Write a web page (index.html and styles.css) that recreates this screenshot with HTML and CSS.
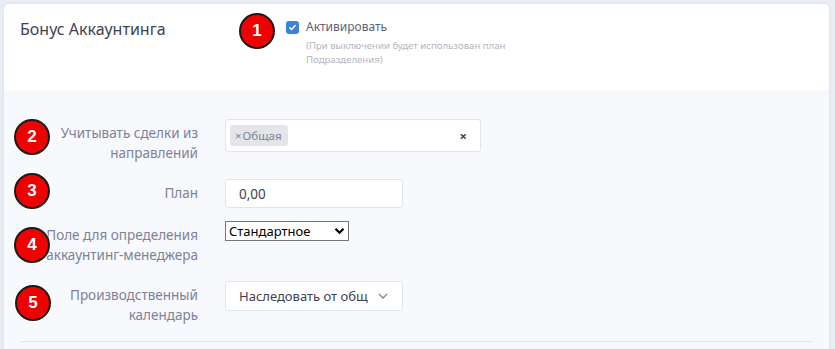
FILE: index.html
```html
<!DOCTYPE html>
<html lang="ru">
<head>
    <meta charset="UTF-8">
    <meta name="viewport" content="width=device-width, initial-scale=1.0">
    <title>Бонус Аккаунтинга</title>
    <link rel="stylesheet" href="styles.css">
</head>
<body>
    <div class="card">
        <div class="card-header">
            <h3 class="card-title">Бонус Аккаунтинга</h3>
            <div class="activate">
                <label class="check">
                    <span class="check-box">
                        <svg width="9" height="9" viewBox="0 0 10 10"><path d="M2 5.2l2 2 4-4.4" fill="none" stroke="#fff" stroke-width="1.6" stroke-linecap="round" stroke-linejoin="round"/></svg>
                    </span>
                    Активировать
                </label>
                <div class="hint">(При выключении будет использован план<br>Подразделения)</div>
            </div>
            <span class="marker marker-1">1</span>
        </div>

        <div class="card-body">
            <div class="form-row row-deals">
                <span class="marker marker-2">2</span>
                <label class="form-label">Учитывать сделки из<br>направлений</label>
                <div class="multi">
                    <span class="tag"><span class="tag-x">×</span>Общая</span>
                    <span class="multi-clear">×</span>
                </div>
            </div>

            <div class="form-row row-plan">
                <span class="marker marker-3">3</span>
                <label class="form-label">План</label>
                <input class="text-input" type="text" value="0,00">
            </div>

            <div class="form-row row-field">
                <span class="marker marker-4">4</span>
                <label class="form-label">Поле для определения<br>аккаунтинг-менеджера</label>
                <div class="native-select">
                    <span>Стандартное</span>
                    <svg width="11" height="8" viewBox="0 0 11 8"><path d="M1.5 1.8l4 4 4-4" fill="none" stroke="#000" stroke-width="2.2"/></svg>
                </div>
            </div>

            <div class="form-row row-calendar">
                <span class="marker marker-5">5</span>
                <label class="form-label">Производственный<br>календарь</label>
                <div class="select">
                    <span class="select-value">Наследовать от общ</span>
                    <svg width="10" height="6" viewBox="0 0 10 6"><path d="M1 1l4 4 4-4" fill="none" stroke="#7e8299" stroke-width="1.3"/></svg>
                </div>
            </div>

            <div class="divider"></div>
        </div>
    </div>
</body>
</html>
```

FILE: styles.css
```css
body {
    margin: 0;
    padding: 4px 6px 0 4px;
    background: #e9edf4;
    font-family: "Noto Sans", "Open Sans", sans-serif;
    overflow: hidden;
}

.card {
    background: #f7f9fc;
    border-radius: 5px 5px 0 0;
    box-shadow: 0 0 4px rgba(60, 70, 100, 0.08);
    min-height: 400px;
}

.card-header {
    position: relative;
    display: flex;
    height: 86px;
    box-sizing: border-box;
    padding: 13px 16px 0 16px;
    background: #fff;
    border-radius: 5px 5px 0 0;
}

.card-title {
    width: 266px;
    margin: 0;
    font-size: 16px;
    font-weight: 400;
    line-height: 24px;
    color: #3f4254;
}

.check {
    display: flex;
    align-items: center;
    gap: 7px;
    font-size: 12px;
    line-height: 20px;
    color: #5e6278;
}

.check-box {
    display: flex;
    align-items: center;
    justify-content: center;
    width: 13px;
    height: 13px;
    border-radius: 3px;
    background: #3b82e0;
}

.hint {
    margin-top: 2px;
    padding-left: 20px;
    font-size: 9.6px;
    line-height: 14px;
    color: #b5b5c3;
}

.card-body {
    padding: 29px 16px 0 16px;
}

.form-row {
    position: relative;
    display: grid;
    grid-template-columns: 178px 1fr;
    column-gap: 27px;
    align-items: start;
    margin-bottom: 16px;
}

.row-plan {
    margin-bottom: 13px;
}

.form-label {
    padding-top: 4px;
    text-align: right;
    font-size: 13.5px;
    line-height: 20px;
    color: #7e8299;
    white-space: nowrap;
}

.multi {
    display: flex;
    align-items: center;
    width: 256px;
    height: 33px;
    box-sizing: border-box;
    padding: 0 13px 0 4px;
    background: #fff;
    border: 1px solid #e1e5ee;
    border-radius: 3px;
}

.tag {
    display: flex;
    align-items: center;
    height: 21px;
    padding: 0 6px 0 5px;
    background: #e4e5e8;
    border-radius: 3px;
    font-size: 11.5px;
    color: #7e8299;
}

.tag-x {
    margin-right: 1px;
}

.multi-clear {
    margin-left: auto;
    font-size: 13px;
    font-weight: 700;
    color: #3f4254;
}

.text-input {
    width: 178px;
    height: 29px;
    box-sizing: border-box;
    padding: 0 13px;
    background: #fff;
    border: 1px solid #e1e5ee;
    border-radius: 3px;
    font-family: inherit;
    font-size: 13.5px;
    color: #3f4254;
    outline: none;
}

.native-select {
    display: flex;
    align-items: center;
    justify-content: space-between;
    width: 124px;
    height: 20px;
    box-sizing: border-box;
    padding: 0 3px;
    background: #fff;
    border: 1px solid #767676;
    font-size: 13px;
    color: #000;
}

.select {
    display: flex;
    align-items: center;
    width: 178px;
    height: 30px;
    box-sizing: border-box;
    padding: 0 14px 0 13px;
    background: #fff;
    border: 1px solid #e1e5ee;
    border-radius: 3px;
    font-size: 13px;
    color: #3f4254;
}

.select-value {
    white-space: nowrap;
}

.select svg {
    margin-left: auto;
}

.divider {
    border-top: 1px solid #e1e5ec;
}

.marker {
    position: absolute;
    display: flex;
    align-items: center;
    justify-content: center;
    width: 36px;
    height: 36px;
    box-sizing: border-box;
    border: 2px solid #1a1a1a;
    border-radius: 50%;
    box-shadow: 0 0 0 1px rgba(255, 255, 255, 0.7);
    background: #f00000;
    color: #fff;
    font-family: "Liberation Sans", Arial, sans-serif;
    font-size: 17px;
    font-weight: 700;
    z-index: 2;
}

.marker-1 { left: 235px; top: 9px; }
.marker-2 { left: -6px; top: 0; }
.marker-3 { left: -6px; top: -6px; }
.marker-4 { left: -6px; top: 6px; }
.marker-5 { left: -5px; top: 4px; }
```
